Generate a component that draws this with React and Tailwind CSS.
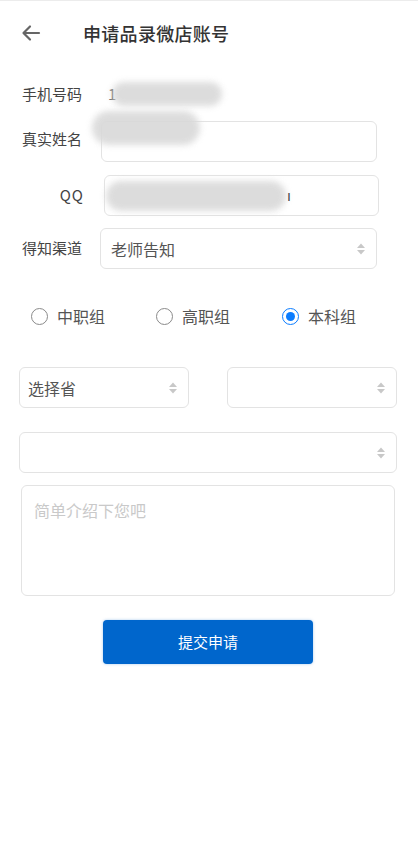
import React, { useState } from 'react';

const font = { fontFamily: '"Noto Sans CJK SC", "Noto Sans", sans-serif' };

const Arrows = () => (
  <svg width="10" height="14" viewBox="0 0 10 14" className="shrink-0">
    <path d="M5 1.5 L9 6 H1 Z" fill="#c8c8c8" />
    <path d="M5 12.5 L9 8 H1 Z" fill="#c8c8c8" />
  </svg>
);

const Redacted = ({ className }) => (
  <div className={`absolute pointer-events-none ${className}`}>
    <div className="h-full w-full rounded-full bg-[#d9d9d9] blur-[3px] opacity-90"></div>
  </div>
);

const Radio = ({ checked, label, onClick }) => (
  <button onClick={onClick} className="flex items-center gap-[9px]">
    {checked ? (
      <span className="w-[17px] h-[17px] rounded-full border-[1.5px] border-[#0a7cff] flex items-center justify-center">
        <span className="w-[9px] h-[9px] rounded-full bg-[#0a7cff]"></span>
      </span>
    ) : (
      <span className="w-[17px] h-[17px] rounded-full border-[1.5px] border-[#8a8a8a]"></span>
    )}
    <span className="text-[16px] text-[#555]">{label}</span>
  </button>
);

const App = () => {
  const [group, setGroup] = useState('本科组');

  return (
    <div style={font} className="w-[418px] h-[855px] bg-white overflow-hidden border-t border-[#ececec]">
      {/* Header */}
      <div className="flex items-center h-[64px] pl-[21px]">
        <svg width="20" height="18" viewBox="0 0 20 18" fill="none" stroke="#666" strokeWidth="2.2" strokeLinecap="round" strokeLinejoin="round">
          <path d="M18 9 H3" />
          <path d="M9 2.5 L2.5 9 L9 15.5" />
        </svg>
        <h1 className="ml-[42px] text-[18px] font-medium text-[#333] tracking-[0.3px]">申请品录微店账号</h1>
      </div>

      {/* Phone */}
      <div className="relative flex items-center h-[32px] mt-[13px] pl-[22px]">
        <span className="text-[15px] text-[#444] w-[86px]">手机号码</span>
        <span className="text-[15px] text-[#666]">1</span>
        <Redacted className="left-[112px] top-[4px] w-[110px] h-[24px]" />
      </div>

      {/* Name */}
      <div className="relative flex items-center mt-[11px] pl-[22px] pr-[41px]">
        <span className="text-[15px] text-[#444] w-[79px] -mt-[5px]">真实姓名</span>
        <div className="flex-1 h-[41px] border border-[#e3e3e3] rounded-[6px] flex items-center pl-[10px] text-[15px] text-[#555]"></div>
        <Redacted className="left-[92px] top-[-10px] w-[108px] h-[34px]" />
      </div>

      {/* QQ */}
      <div className="relative flex items-center mt-[13px] pl-[22px] pr-[39px]">
        <span className="text-[15px] text-[#444] w-[82px] text-right pr-[20px] tracking-[1px]">QQ</span>
        <div className="flex-1 h-[41px] border border-[#e3e3e3] rounded-[6px] flex items-center pl-[182px] text-[15px] text-[#333]">ı</div>
        <Redacted className="left-[106px] top-[6px] w-[180px] h-[30px]" />
      </div>

      {/* Channel */}
      <div className="flex items-center mt-[12px] pl-[22px] pr-[41px]">
        <span className="text-[15px] text-[#444] w-[78px]">得知渠道</span>
        <div className="flex-1 h-[41px] border border-[#e3e3e3] rounded-[6px] flex items-center justify-between pl-[10px] pr-[10px]">
          <span className="text-[16px] text-[#555]">老师告知</span>
          <Arrows />
        </div>
      </div>

      {/* Groups */}
      <div className="flex items-center mt-[35px] pl-[31px]">
        <div className="w-[125px]">
          <Radio label="中职组" checked={group === '中职组'} onClick={() => setGroup('中职组')} />
        </div>
        <div className="w-[126px]">
          <Radio label="高职组" checked={group === '高职组'} onClick={() => setGroup('高职组')} />
        </div>
        <Radio label="本科组" checked={group === '本科组'} onClick={() => setGroup('本科组')} />
      </div>

      {/* Region selects */}
      <div className="flex items-center justify-between mt-[39px] pl-[19px] pr-[21px]">
        <div className="w-[170px] h-[41px] border border-[#e3e3e3] rounded-[6px] flex items-center justify-between pl-[8px] pr-[10px]">
          <span className="text-[16px] text-[#555]">选择省</span>
          <Arrows />
        </div>
        <div className="w-[170px] h-[41px] border border-[#e3e3e3] rounded-[6px] flex items-center justify-end pr-[10px]">
          <Arrows />
        </div>
      </div>

      <div className="mt-[24px] pl-[19px] pr-[21px]">
        <div className="h-[41px] border border-[#e3e3e3] rounded-[6px] flex items-center justify-end pr-[10px]">
          <Arrows />
        </div>
      </div>

      {/* Intro */}
      <div className="mt-[12px] pl-[21px] pr-[23px]">
        <div className="h-[111px] border border-[#e3e3e3] rounded-[6px] pt-[12px] pl-[12px] text-[16px] text-[#c9c9c9]">
          简单介绍下您吧
        </div>
      </div>

      {/* Submit */}
      <div className="mt-[24px] pl-[103px]">
        <button className="w-[210px] h-[44px] bg-[#0066cc] rounded-[4px] text-white text-[15px] shadow-[0_0_3px_rgba(0,102,204,0.35)]">
          提交申请
        </button>
      </div>
    </div>
  );
};

export default App;
